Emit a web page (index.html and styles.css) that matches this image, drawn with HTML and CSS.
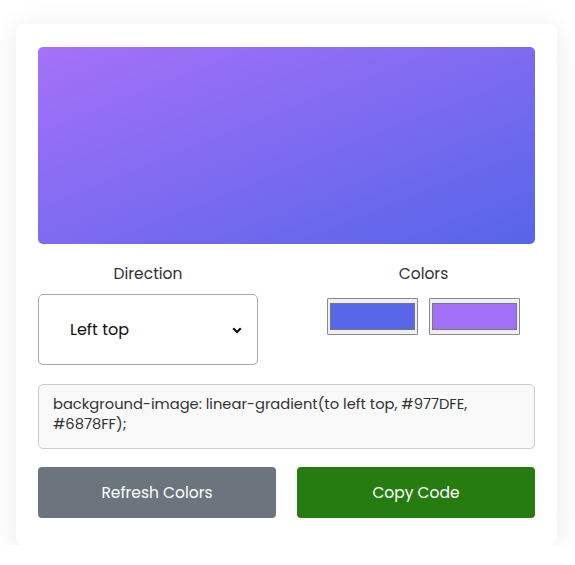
FILE: index.html
```html
<!DOCTYPE html>
<html>
<head>
<meta charset="utf-8">
<link rel="stylesheet" href="styles.css">
</head>
<body>
<div class="card">
  <div class="preview"></div>
  <div class="options">
    <div class="col direction">
      <div class="label">Direction</div>
      <div class="select">
        <span>Left top</span>
        <svg class="chev" width="10" height="7" viewBox="0 0 10 7"><path d="M1.2 1.2 L5 5 L8.8 1.2" fill="none" stroke="#111" stroke-width="2.2"/></svg>
      </div>
    </div>
    <div class="col colors">
      <div class="label">Colors</div>
      <div class="swatches">
        <div class="swatch"><div class="fill blue"></div></div>
        <div class="swatch"><div class="fill purple"></div></div>
      </div>
    </div>
  </div>
  <div class="code">background-image: linear-gradient(to left top, #977DFE, #6878FF);</div>
  <div class="buttons">
    <button class="btn refresh">Refresh Colors</button>
    <button class="btn copy">Copy Code</button>
  </div>
</div>
</body>
</html>
```
FILE: styles.css
```css
* { box-sizing: border-box; }
body {
  margin: 0;
  background: #fff;
  font-family: "Poppins", "Open Sans", "Noto Sans", sans-serif;
}
.card {
  margin: 24px 0 0 16px;
  width: 541px;
  height: 521px;
  background: #fff;
  border-radius: 8px;
  box-shadow: 0 4px 30px rgba(0,0,0,0.09);
  padding: 23px 22px;
}
.preview {
  height: 197px;
  border-radius: 5px;
  background: linear-gradient(to left top, #5665E9, #A571F8);
}
.options {
  display: flex;
  justify-content: space-between;
  margin-top: 20px;
}
.col { display: flex; flex-direction: column; align-items: center; }
.label {
  font-size: 15.5px;
  color: #333;
  line-height: 20px;
}
.direction { width: 220px; }
.direction .select {
  margin-top: 10px;
  width: 220px;
  height: 71px;
  border: 1px solid #aaa;
  border-radius: 5px;
  display: flex;
  align-items: center;
  justify-content: space-between;
  padding: 0 15px 0 31px;
  font-size: 16px;
  color: #111;
}
.chev { margin-top: 1px; }
.colors { width: 223px; }
.swatches {
  margin-top: 14px;
  display: flex;
  gap: 11px;
}
.swatch {
  width: 91px;
  height: 37px;
  background: #efefef;
  border: 1px solid #8a8a8a;
  border-radius: 1px;
  padding: 4px 2px;
}
.fill {
  width: 100%;
  height: 100%;
  border: 1px solid #777;
}
.blue { background: #5866E9; }
.purple { background: #A371F7; }
.code {
  margin-top: 19px;
  height: 65px;
  background: #f9f9f9;
  border: 1px solid #ccc;
  border-radius: 5px;
  padding: 9px 14px;
  font-size: 14.7px;
  line-height: 20px;
  color: #333;
}
.buttons {
  margin-top: 18px;
  display: flex;
  gap: 21px;
}
.btn {
  flex: 1;
  height: 51px;
  border: none;
  border-radius: 4px;
  color: #fff;
  font-family: inherit;
  font-size: 15.5px;
}
.refresh { background: #6c757d; }
.copy { background: #267c10; }
```
